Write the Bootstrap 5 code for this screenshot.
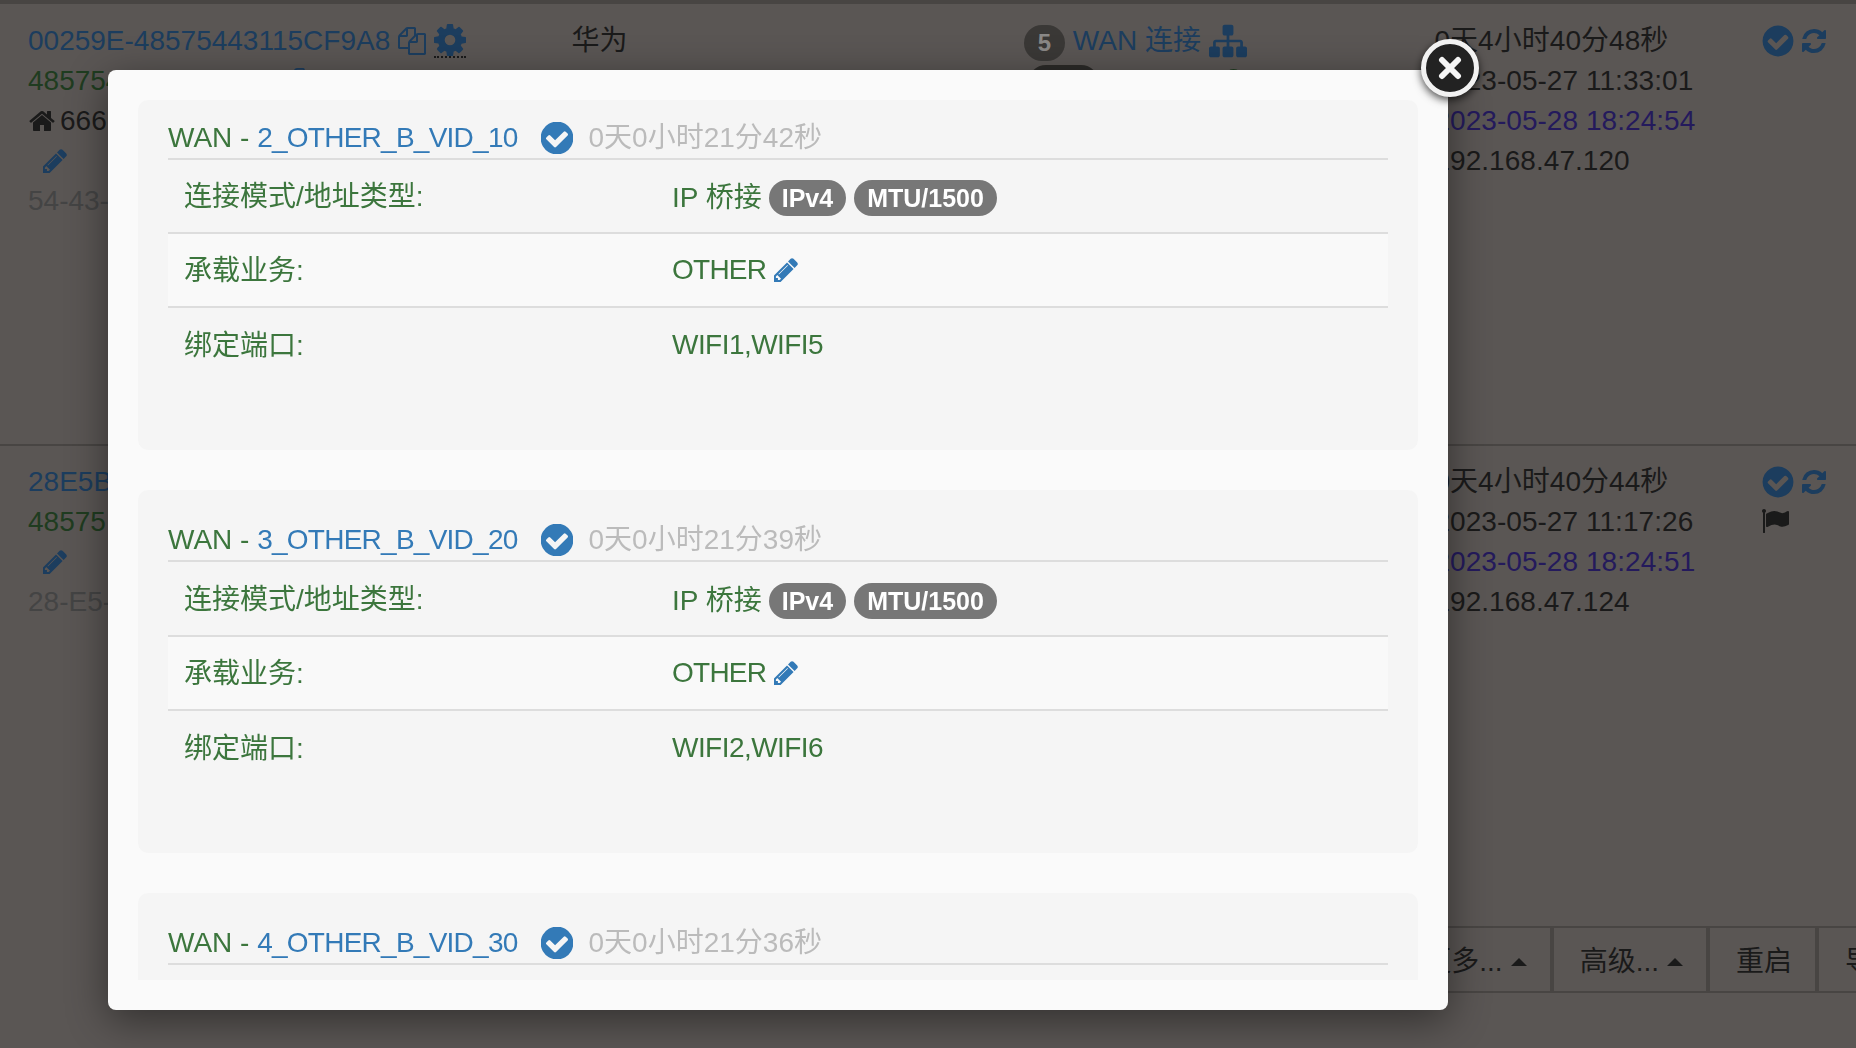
<!DOCTYPE html>
<html lang="zh">
<head>
<meta charset="utf-8">
<title>WAN</title>
<link href="https://cdn.jsdelivr.net/npm/bootstrap@5.3.0/dist/css/bootstrap.min.css" rel="stylesheet">
<style>
html,body{height:100%;overflow:hidden}
body{font-family:"Liberation Sans","Noto Sans CJK SC",sans-serif;font-size:28px;line-height:40px;color:#1a1a1a;background:#5a5654}
svg.ico{fill:currentColor;display:inline-block;flex:none}
a.lnk{color:#337ab7;text-decoration:none}
.tx-blue{color:#337ab7}
.tx-green{color:#3c763d}
.tx-grey{color:#bbb}
.under-page a.lnk,.under-page .tx-blue{color:#1c3d5e}
.under-page .tx-green{color:#1f3c20}
.under-page .tx-muted{color:#444}
.under-page .tx-visited{color:#241a5c}
.dev-row{border-top:4px solid #484543;padding:17px 28px 0;height:444px;width:1856px;box-sizing:border-box}
.dev-row.second{border-top:2px solid #484543;height:482px;padding-top:16px}
.c-a{width:544px}
.c-b{width:453px}
.c-c{width:411px}
.c-d{width:326px;letter-spacing:.05px}
.wan-link-line{height:40px}
.num-pill{display:inline-flex;align-items:center;justify-content:center;width:41px;height:36px;border-radius:18px;background:#3a3836;color:#8a8886;font-weight:700;font-size:24px;margin:4px 8px 0 0}
.dark-pill{width:71px;height:36px;border-radius:18px;background:#2b2a28;margin:4px 0 0 4px}
.ok-dot{width:17px;height:17px;border-radius:50%;background:#1f3c20;margin:8px 0 0 126px}
.gear-tip{border-bottom:2px dotted #1a1a1a;line-height:0;padding-bottom:0}
.edit-line{height:40px;padding-left:15px}
.tool-bar{justify-content:flex-end;height:67px;margin-right:-70px}
.tool-btn{border:2px solid #484543;background:transparent;color:#1a1a1a;font-size:28px;line-height:40px;padding:4px 23px 0 26px;display:flex;align-items:center;white-space:nowrap}
.up-caret{display:inline-block;width:0;height:0;border-left:8px solid transparent;border-right:8px solid transparent;border-bottom:8px solid currentColor;margin-left:8px}
.scrim{position:fixed;inset:0;z-index:1050}
.sheet{position:absolute;left:108px;top:70px;width:1340px;height:940px;background:#fafafa;border-radius:8px;padding:30px;box-shadow:0 10px 40px rgba(0,0,0,.45)}
.sheet-scroll{height:880px;overflow:hidden}
.x-round{position:absolute;left:1313px;top:-31px;width:58px;height:58px;border-radius:50%;background:#222;border:5px solid #f2f2f2;box-shadow:0 3px 8px rgba(0,0,0,.7);padding:0;display:flex;align-items:center;justify-content:center}
.wan-box{background:#f5f5f5;border-radius:10px;padding:18px 30px 70px;margin-bottom:40px}
.wan-box+.wan-box{padding-top:30px}
.wan-head{border-bottom:2px solid #ddd;height:42px;white-space:nowrap}
.wan-rows>div{height:74px;border-bottom:2px solid #ddd}
.wan-rows>div:nth-child(even){background:#f9f9f9}
.wan-rows>div:last-child{border-bottom:0;height:72px;padding-top:2px}
.wan-box+.wan-box .wan-rows>div:first-child{height:75px}
.lbl-cell{width:40%;padding:2px 16px 0}
.val-cell{padding-left:16px}
.val-first{padding-top:4px}
.tight{letter-spacing:-.75px}
.tight-val{letter-spacing:-.55px}
.head-check{margin:4px 0 0 23px}
.head-time{margin-left:16px}
.pill-grey{display:inline-block;height:36px;line-height:36px;background:#777;color:#fff;font-weight:700;font-size:25px;padding:0 13px;border-radius:18px;margin-left:7px}
.pill-grey+.pill-grey{margin-left:8px}
.pen-gap{margin-left:8px}
</style>
</head>
<body>

<div class="under-page">
<div class="dev-row d-flex">
  <div class="c-a">
    <div class="d-flex align-items-center"><a class="lnk" href="#">00259E-48575443115CF9A8</a>
      <svg class="ico tx-blue ms-2" width="28" height="28" viewBox="0 0 1792 1792"><path d="M1696 384q40 0 68 28t28 68v1216q0 40-28 68t-68 28h-960q-40 0-68-28t-28-68v-288h-544q-40 0-68-28t-28-68v-672q0-40 20-88t48-76l408-408q28-28 76-48t88-20h416q40 0 68 28t28 68v328q68-40 128-40h416zm-544 213l-299 299h299v-299zm-640-384l-299 299h299v-299zm196 647l316-316v-416h-384v416q0 40-28 68t-68 28h-416v640h512v-256q0-40 20-88t48-76zm956 804v-1152h-384v416q0 40-28 68t-68 28h-416v640h896z"/></svg>
      <span class="gear-tip ms-2"><svg class="ico tx-blue" width="32" height="32" viewBox="128 128 1536 1536"><path d="M1152 896q0-106-75-181t-181-75-181 75-75 181 75 181 181 75 181-75 75-181zm512-109v222q0 12-8 23t-20 13l-185 28q-19 54-39 91 35 50 107 138 10 12 10 25t-9 23q-27 37-99 108t-94 71q-12 0-26-9l-138-108q-44 23-91 38-16 136-29 186-7 28-36 28h-222q-14 0-24.500-8.500t-11.500-21.500l-28-184q-49-16-90-37l-141 107q-10 9-25 9-14 0-25-11-126-114-165-168-7-10-7-23 0-12 8-23 15-21 51-66.500t54-70.500q-27-50-41-99l-183-27q-13-2-21-12.500t-8-23.500v-222q0-12 8-23t19-13l186-28q14-46 39-92-40-57-107-138-10-12-10-24 0-10 9-23 26-36 98.500-107.500t94.500-71.500q13 0 26 10l138 107q44-23 91-38 16-136 29-186 7-28 36-28h222q14 0 24.500 8.500t11.500 21.500l28 184q49 16 90 37l142-107q9-9 24-9 13 0 25 10 129 119 165 170 7 8 7 22 0 12-8 23-15 21-51 66.500t-54 70.500q26 50 41 98l183 28q13 2 21 12.500t8 23.500z"/></svg></span>
    </div>
    <div class="tx-green d-flex align-items-center">48575443115CF9A8<svg class="ico tx-blue ms-1" width="26" height="26" viewBox="0 0 1792 1792"><path d="M1696 384q40 0 68 28t28 68v1216q0 40-28 68t-68 28h-960q-40 0-68-28t-28-68v-288h-544q-40 0-68-28t-28-68v-672q0-40 20-88t48-76l408-408q28-28 76-48t88-20h416q40 0 68 28t28 68v328q68-40 128-40h416zm-544 213l-299 299h299v-299zm-640-384l-299 299h299v-299zm196 647l316-316v-416h-384v416q0 40-28 68t-68 28h-416v640h512v-256q0-40 20-88t48-76zm956 804v-1152h-384v416q0 40-28 68t-68 28h-416v640h896z"/></svg></div>
    <div class="d-flex align-items-center"><svg class="ico me-1" width="28" height="28" viewBox="0 0 1792 1792"><path d="M1472 992v480q0 26-19 45t-45 19h-384v-384h-256v384h-384q-26 0-45-19t-19-45v-480q0-1 .5-3t.5-3l575-474 575 474q1 2 1 6zm223-69l-62 74q-8 9-21 11h-3q-13 0-21-7l-692-577-692 577q-12 8-24 7-13-2-21-11l-62-74q-8-10-7-23.500t11-21.500l719-599q32-26 76-26t76 26l244 204v-195q0-14 9-23t23-9h192q14 0 23 9t9 23v408l219 182q10 8 11 21.500t-7 23.500z"/></svg>666</div>
    <div class="edit-line d-flex align-items-center"><svg class="ico tx-blue" width="24" height="24" viewBox="136 136 1520 1520"><path d="M491 1536l91-91-235-235-91 91v107h128v128h107zm523-928q0-22-22-22-10 0-17 7l-542 542q-7 7-7 17 0 22 22 22 10 0 17-7l542-542q7-7 7-17zm-54-192l416 416-832 832h-416v-416zm683 96q0 53-37 90l-166 166-416-416 166-165q36-38 90-38 53 0 91 38l235 234q37 39 37 91z"/></svg></div>
    <div class="tx-muted">54-43-</div>
  </div>
  <div class="c-b"><div>华为</div><div>MA5671A</div></div>
  <div class="c-c">
    <div class="wan-link-line d-flex align-items-center"><span class="num-pill">5</span><a class="lnk" href="#">WAN 连接</a>
      <svg class="ico tx-blue ms-2" width="38" height="38" viewBox="0 0 1792 1792"><path d="M1792 1248v320q0 40-28 68t-68 28h-320q-40 0-68-28t-28-68v-320q0-40 28-68t68-28h96v-192h-512v192h96q40 0 68 28t28 68v320q0 40-28 68t-68 28h-320q-40 0-68-28t-28-68v-320q0-40 28-68t68-28h96v-192h-512v192h96q40 0 68 28t28 68v320q0 40-28 68t-68 28h-320q-40 0-68-28t-28-68v-320q0-40 28-68t68-28h96v-192q0-52 38-90t90-38h512v-192h-96q-40 0-68-28t-28-68v-320q0-40 28-68t68-28h320q40 0 68 28t28 68v320q0 40-28 68t-68 28h-96v192h512q52 0 90 38t38 90v192h96q40 0 68 28t28 68z"/></svg></div>
    <div class="d-flex"><span class="dark-pill"></span><span class="ok-dot"></span></div>
  </div>
  <div class="c-d">
    <div>0天4小时40分48秒</div>
    <div>2023-05-27 11:33:01</div>
    <div class="tx-visited">2023-05-28 18:24:54</div>
    <div>192.168.47.120</div>
  </div>
  <div class="d-flex gap-1 align-items-center tx-blue" style="height:40px">
    <svg class="ico" width="36" height="36" viewBox="0 0 1792 1792"><path d="M1412 734q0-28-18-46l-91-90q-19-19-45-19t-45 19l-408 407-226-226q-19-19-45-19t-45 19l-91 90q-18 18-18 46 0 27 18 45l362 362q19 19 45 19 27 0 46-19l543-543q18-18 18-45zm252 162q0 209-103 385.500t-279.500 279.500-385.500 103-385.500-103-279.500-279.500-103-385.500 103-385.500 279.500-279.500 385.500-103 385.500 103 279.500 279.500 103 385.500z"/></svg>
    <svg class="ico" width="28" height="28" viewBox="0 0 1792 1792"><path d="M1639 1056q0 5-1 7-64 268-268 434.500t-478 166.500q-146 0-282.500-55t-243.500-157l-129 129q-19 19-45 19t-45-19-19-45v-448q0-26 19-45t45-19h448q26 0 45 19t19 45-19 45l-137 137q71 66 161 102t187 36q134 0 250-65t186-179q11-17 53-117 8-23 30-23h192q13 0 22.500 9.500t9.500 22.500zm25-800v448q0 26-19 45t-45 19h-448q-26 0-45-19t-19-45 19-45l138-138q-148-137-349-137-134 0-250 65t-186 179q-11 17-53 117-8 23-30 23h-199q-13 0-22.500-9.500t-9.500-22.500v-7q65-268 270-434.500t480-166.500q146 0 284 55.500t245 156.500l130-129q19-19 45-19t45 19 19 45z"/></svg>
  </div>
</div>

<div class="dev-row second d-flex">
  <div class="c-a">
    <div><a class="lnk" href="#">28E5B</a></div>
    <div class="tx-green">48575</div>
    <div class="edit-line d-flex align-items-center"><svg class="ico tx-blue" width="24" height="24" viewBox="136 136 1520 1520"><path d="M491 1536l91-91-235-235-91 91v107h128v128h107zm523-928q0-22-22-22-10 0-17 7l-542 542q-7 7-7 17 0 22 22 22 10 0 17-7l542-542q7-7 7-17zm-54-192l416 416-832 832h-416v-416zm683 96q0 53-37 90l-166 166-416-416 166-165q36-38 90-38 53 0 91 38l235 234q37 39 37 91z"/></svg></div>
    <div class="tx-muted">28-E5-</div>
  </div>
  <div class="c-b"></div>
  <div class="c-c"></div>
  <div class="c-d">
    <div>0天4小时40分44秒</div>
    <div>2023-05-27 11:17:26</div>
    <div class="tx-visited">2023-05-28 18:24:51</div>
    <div>192.168.47.124</div>
  </div>
  <div>
    <div class="d-flex gap-1 align-items-center tx-blue" style="height:40px">
      <svg class="ico" width="36" height="36" viewBox="0 0 1792 1792"><path d="M1412 734q0-28-18-46l-91-90q-19-19-45-19t-45 19l-408 407-226-226q-19-19-45-19t-45 19l-91 90q-18 18-18 46 0 27 18 45l362 362q19 19 45 19 27 0 46-19l543-543q18-18 18-45zm252 162q0 209-103 385.500t-279.500 279.500-385.500 103-385.500-103-279.500-279.500-103-385.500 103-385.500 279.500-279.500 385.500-103 385.500 103 279.500 279.500 103 385.500z"/></svg>
      <svg class="ico" width="28" height="28" viewBox="0 0 1792 1792"><path d="M1639 1056q0 5-1 7-64 268-268 434.500t-478 166.500q-146 0-282.500-55t-243.500-157l-129 129q-19 19-45 19t-45-19-19-45v-448q0-26 19-45t45-19h448q26 0 45 19t19 45-19 45l-137 137q71 66 161 102t187 36q134 0 250-65t186-179q11-17 53-117 8-23 30-23h192q13 0 22.500 9.500t9.500 22.500zm25-800v448q0 26-19 45t-45 19h-448q-26 0-45-19t-19-45 19-45l138-138q-148-137-349-137-134 0-250 65t-186 179q-11 17-53 117-8 23-30 23h-199q-13 0-22.500-9.500t-9.500-22.500v-7q65-268 270-434.500t480-166.500q146 0 284 55.500t245 156.500l130-129q19-19 45-19t45 19 19 45z"/></svg>
    </div>
    <div class="d-flex align-items-center" style="height:38px;padding-left:1px"><svg class="ico" width="28" height="28" viewBox="0 0 1792 1792"><path d="M320 256q0 72-64 110v1266q0 13-9.500 22.500t-22.500 9.500h-64q-13 0-22.500-9.500t-9.500-22.500v-1266q-64-38-64-110 0-53 37.500-90.500t90.500-37.500 90.500 37.500 37.500 90.500zm1472 64v763q0 25-12.500 38.500t-39.500 28.500q-215 116-369 116-61 0-123.500-22t-108.500-48-115.500-48-142.500-22q-192 0-464 146-17 9-33 9-26 0-45-19t-19-45v-742q0-32 31-55 21-14 79-43 236-120 421-120 107 0 200 29t219 88q38 19 88 19 54 0 117.500-21t110-47 88-47 54.500-21q26 0 45 19t19 45z"/></svg></div>
  </div>
</div>

<div class="tool-bar d-flex">
  <button class="tool-btn" type="button">更多...<span class="up-caret"></span></button>
  <button class="tool-btn" type="button">高级...<span class="up-caret"></span></button>
  <button class="tool-btn" type="button">重启</button>
  <button class="tool-btn" type="button">导出</button>
</div>
</div>

<div class="scrim">
  <div class="sheet">
    <button class="x-round" type="button" aria-label="关闭"><svg width="24" height="24" viewBox="0 0 24 24"><path d="M4 4 20 20M20 4 4 20" stroke="#f5f5f5" stroke-width="6" stroke-linecap="round"/></svg></button>
    <div class="sheet-scroll">

      <div class="wan-box tx-green">
        <div class="wan-head d-flex align-items-start">WAN -&nbsp;<a class="lnk tight" href="#">2_OTHER_B_VID_10</a>
          <svg class="ico head-check tx-blue" width="32" height="32" viewBox="146 146 1500 1500"><path d="M1412 734q0-28-18-46l-91-90q-19-19-45-19t-45 19l-408 407-226-226q-19-19-45-19t-45 19l-91 90q-18 18-18 46 0 27 18 45l362 362q19 19 45 19 27 0 46-19l543-543q18-18 18-45zm252 162q0 209-103 385.500t-279.500 279.500-385.500 103-385.500-103-279.500-279.500-103-385.500 103-385.500 279.500-279.500 385.500-103 385.500 103 279.500 279.500 103 385.500z"/></svg>
          <span class="tx-grey head-time">0天0小时21分42秒</span></div>
        <div class="wan-rows">
          <div class="d-flex align-items-center"><div class="lbl-cell">连接模式/地址类型:</div><div class="val-cell val-first d-flex align-items-center">IP 桥接<span class="pill-grey">IPv4</span><span class="pill-grey">MTU/1500</span></div></div>
          <div class="d-flex align-items-center"><div class="lbl-cell">承载业务:</div><div class="val-cell d-flex align-items-center"><span class="tight">OTHER</span><svg class="ico pen-gap tx-blue" width="24" height="24" viewBox="136 136 1520 1520"><path d="M491 1536l91-91-235-235-91 91v107h128v128h107zm523-928q0-22-22-22-10 0-17 7l-542 542q-7 7-7 17 0 22 22 22 10 0 17-7l542-542q7-7 7-17zm-54-192l416 416-832 832h-416v-416zm683 96q0 53-37 90l-166 166-416-416 166-165q36-38 90-38 53 0 91 38l235 234q37 39 37 91z"/></svg></div></div>
          <div class="d-flex align-items-center"><div class="lbl-cell">绑定端口:</div><div class="val-cell tight-val">WIFI1,WIFI5</div></div>
        </div>
      </div>

      <div class="wan-box tx-green">
        <div class="wan-head d-flex align-items-start">WAN -&nbsp;<a class="lnk tight" href="#">3_OTHER_B_VID_20</a>
          <svg class="ico head-check tx-blue" width="32" height="32" viewBox="146 146 1500 1500"><path d="M1412 734q0-28-18-46l-91-90q-19-19-45-19t-45 19l-408 407-226-226q-19-19-45-19t-45 19l-91 90q-18 18-18 46 0 27 18 45l362 362q19 19 45 19 27 0 46-19l543-543q18-18 18-45zm252 162q0 209-103 385.500t-279.500 279.500-385.500 103-385.500-103-279.500-279.500-103-385.500 103-385.500 279.500-279.500 385.500-103 385.500 103 279.500 279.500 103 385.500z"/></svg>
          <span class="tx-grey head-time">0天0小时21分39秒</span></div>
        <div class="wan-rows">
          <div class="d-flex align-items-center"><div class="lbl-cell">连接模式/地址类型:</div><div class="val-cell val-first d-flex align-items-center">IP 桥接<span class="pill-grey">IPv4</span><span class="pill-grey">MTU/1500</span></div></div>
          <div class="d-flex align-items-center"><div class="lbl-cell">承载业务:</div><div class="val-cell d-flex align-items-center"><span class="tight">OTHER</span><svg class="ico pen-gap tx-blue" width="24" height="24" viewBox="136 136 1520 1520"><path d="M491 1536l91-91-235-235-91 91v107h128v128h107zm523-928q0-22-22-22-10 0-17 7l-542 542q-7 7-7 17 0 22 22 22 10 0 17-7l542-542q7-7 7-17zm-54-192l416 416-832 832h-416v-416zm683 96q0 53-37 90l-166 166-416-416 166-165q36-38 90-38 53 0 91 38l235 234q37 39 37 91z"/></svg></div></div>
          <div class="d-flex align-items-center"><div class="lbl-cell">绑定端口:</div><div class="val-cell tight-val">WIFI2,WIFI6</div></div>
        </div>
      </div>

      <div class="wan-box tx-green">
        <div class="wan-head d-flex align-items-start">WAN -&nbsp;<a class="lnk tight" href="#">4_OTHER_B_VID_30</a>
          <svg class="ico head-check tx-blue" width="32" height="32" viewBox="146 146 1500 1500"><path d="M1412 734q0-28-18-46l-91-90q-19-19-45-19t-45 19l-408 407-226-226q-19-19-45-19t-45 19l-91 90q-18 18-18 46 0 27 18 45l362 362q19 19 45 19 27 0 46-19l543-543q18-18 18-45zm252 162q0 209-103 385.500t-279.500 279.500-385.500 103-385.500-103-279.500-279.500-103-385.500 103-385.500 279.500-279.500 385.500-103 385.500 103 279.500 279.500 103 385.500z"/></svg>
          <span class="tx-grey head-time">0天0小时21分36秒</span></div>
      </div>

    </div>
  </div>
</div>

<script src="https://cdn.jsdelivr.net/npm/bootstrap@5.3.0/dist/js/bootstrap.bundle.min.js"></script>
</body>
</html>
